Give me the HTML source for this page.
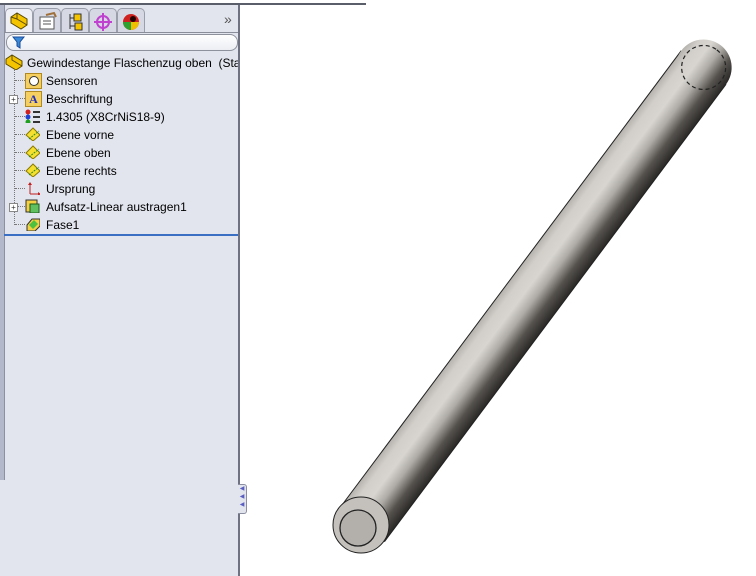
<!DOCTYPE html>
<html><head><style>
body{margin:0;width:756px;height:576px;background:#fff;position:relative;overflow:hidden;font-family:"Liberation Sans",sans-serif}
#topline{position:absolute;left:0;top:0;width:366px;height:3px;background:#fff;border-bottom:2px solid #5a5e6a}
#panel{position:absolute;left:0;top:5px;width:238px;height:571px;background:#e2e5ee;border-right:2px solid #6e7282}
#strip{position:absolute;left:0;top:5px;width:4px;height:475px;background:#b3b8cb;border-right:1px solid #8c90a0}
.tab{position:absolute;top:8px;width:26px;height:24px;background:#d6d9e3;border:1px solid #9a9eaa;border-bottom:none;border-radius:5px 5px 0 0}
#tabline{position:absolute;left:4px;top:32px;width:234px;height:1px;background:#8a8e9a}
#filter{position:absolute;left:6px;top:34px;width:230px;height:15px;border:1px solid #8d919c;border-radius:8px;background:linear-gradient(#fff,#eceef3)}
.it{position:absolute;left:46px;font-size:12px;color:#000;white-space:nowrap}
.ic{position:absolute;left:25px;width:15px;height:14px}
#blue{position:absolute;left:4px;top:234px;width:234px;height:2px;background:#3a6fc4}
.vl{position:absolute;left:14px;border-left:1px dotted #777}
.hl{position:absolute;border-top:1px dotted #777;width:10px;left:15px}
.pl{position:absolute;left:9px;width:7px;height:7px;border:1px solid #888;background:#fff;font-size:8px;line-height:7px;text-align:center;color:#333}
</style></head><body>
<div id="topline"></div>
<div id="panel"></div>
<div id="strip"></div>
<div class="tab" style="left:5px;background:#eef0f5"><svg width="26" height="24"><path d="M5 8l6-4 10 6v6l-6 4-10-6z" fill="#f5c400" stroke="#5a4a00"/><path d="M11 4v6l10 6M5 8l6 2" stroke="#5a4a00" fill="none"/></svg></div>
<div class="tab" style="left:33px"><svg width="26" height="24"><rect x="6" y="8" width="14" height="12" fill="#fff" stroke="#555"/><path d="M9 12h8M9 15h8" stroke="#555"/><path d="M12 6l8-2 2 4" stroke="#a0703a" stroke-width="2" fill="none"/></svg></div>
<div class="tab" style="left:61px"><svg width="26" height="24"><path d="M8 5v15M8 9h5M8 17h5" stroke="#333" fill="none"/><rect x="12" y="5" width="7" height="7" fill="#f5c400" stroke="#333"/><rect x="13" y="14" width="7" height="7" fill="#f5c400" stroke="#333"/></svg></div>
<div class="tab" style="left:89px"><svg width="26" height="24"><circle cx="13" cy="13" r="6" fill="none" stroke="#c040d0" stroke-width="2"/><path d="M13 4v18M4 13h18" stroke="#c040d0" stroke-width="2"/></svg></div>
<div class="tab" style="left:117px"><svg width="26" height="24"><circle cx="13" cy="13" r="8" fill="#d02020"/><path d="M13 13L5 13A8 8 0 0 0 13 21z" fill="#30a030"/><path d="M13 13L13 21A8 8 0 0 0 21 13z" fill="#f0c000"/><circle cx="15" cy="10" r="3" fill="#200"/></svg></div>
<div style="position:absolute;left:224px;top:11px;font-size:14px;color:#555">»</div>
<div id="tabline"></div>
<div id="filter"><svg width="14" height="14" style="position:absolute;left:5px;top:1px"><path d="M1 1h11l-4 5v6l-3-2V6z" fill="#3a8ad8" stroke="#1a4a9a"/></svg></div>
<svg style="position:absolute;left:5px;top:54px" width="18" height="16"><path d="M1 5l6-4 10 6v5l-6 4-10-6z" fill="#f5c400" stroke="#5a4a00"/><path d="M7 1v5l10 6" stroke="#5a4a00" fill="none"/></svg>
<div class="it" style="left:27px;top:56px;width:211px;overflow:hidden">Gewindestange Flaschenzug oben&nbsp; (Stan</div>
<div class="vl" style="top:70px;height:155px"></div>
<div class="hl" style="top:80px"></div><div class="hl" style="top:98px"></div><div class="hl" style="top:116px"></div><div class="hl" style="top:134px"></div><div class="hl" style="top:152px"></div><div class="hl" style="top:170px"></div><div class="hl" style="top:188px"></div><div class="hl" style="top:206px"></div><div class="hl" style="top:224px"></div>
<div class="pl" style="top:95px">+</div><div class="pl" style="top:203px">+</div>
<div class="ic" style="top:73px;background:#f5d060;border:1px solid #b08a20"><div style="margin:2px 3px;width:8px;height:8px;border:1px solid #333;border-radius:50%;background:#fff"></div></div>
<div class="it" style="top:74px">Sensoren</div>
<div class="ic" style="top:91px;background:#f5d060;border:1px solid #b08a20;color:#2030c0;font:bold 12px 'Liberation Serif',serif;text-align:center;line-height:14px">A</div>
<div class="it" style="top:92px">Beschriftung</div>
<svg class="ic" style="top:109px" width="16" height="15"><circle cx="3" cy="3" r="2.5" fill="#d02020"/><circle cx="3" cy="8" r="2.5" fill="#2040d0"/><circle cx="3" cy="13" r="2.5" fill="#20a020"/><path d="M8 3h7M8 8h7M8 13h7" stroke="#333" stroke-width="2"/></svg>
<div class="it" style="top:110px">1.4305 (X8CrNiS18-9)</div>
<svg class="ic" style="top:127px" width="16" height="15"><path d="M8 1l7 7-7 6-7-6z" fill="#f5e030" stroke="#8a7a00"/><path d="M4 12l10-8" stroke="#2a8a2a" stroke-dasharray="2 1"/></svg>
<div class="it" style="top:128px">Ebene vorne</div>
<svg class="ic" style="top:145px" width="16" height="15"><path d="M8 1l7 7-7 6-7-6z" fill="#f5e030" stroke="#8a7a00"/><path d="M4 12l10-8" stroke="#2a8a2a" stroke-dasharray="2 1"/></svg>
<div class="it" style="top:146px">Ebene oben</div>
<svg class="ic" style="top:163px" width="16" height="15"><path d="M8 1l7 7-7 6-7-6z" fill="#f5e030" stroke="#8a7a00"/><path d="M4 12l10-8" stroke="#2a8a2a" stroke-dasharray="2 1"/></svg>
<div class="it" style="top:164px">Ebene rechts</div>
<svg class="ic" style="top:181px" width="16" height="15"><path d="M5 13V2M5 13h10" stroke="#c02020"/><path d="M3 4l2-3 2 3M13 11l3 2-3 2" fill="#c02020"/></svg>
<div class="it" style="top:182px">Ursprung</div>
<svg class="ic" style="top:199px" width="16" height="15"><rect x="1" y="1" width="11" height="12" fill="#f5d040" stroke="#333"/><rect x="5" y="5" width="9" height="9" fill="#60c060" stroke="#1a5a1a"/></svg>
<div class="it" style="top:200px">Aufsatz-Linear austragen1</div>
<svg class="ic" style="top:217px" width="16" height="15"><path d="M2 8l5-6h8v7l-5 5H2z" fill="#f5d040" stroke="#333"/><path d="M4 8l5-5 4 4-5 5z" fill="#50c040"/></svg>
<div class="it" style="top:218px">Fase1</div>
<div id="blue"></div>
<div style="position:absolute;left:238px;top:484px;width:8px;height:28px;background:#e2e5ee;border:1px solid #8a8ea0;border-left:none;border-radius:0 3px 3px 0;color:#5a5ec0;font-size:6px;line-height:8px;text-align:center">◀<br>◀<br>◀</div>
<svg style="position:absolute;left:0;top:0" width="756" height="576">
<defs><linearGradient id="g" x1="0" y1="-28" x2="0" y2="28" gradientUnits="userSpaceOnUse">
<stop offset="0" stop-color="#b5b2ad"/><stop offset="0.15" stop-color="#d2cfca"/><stop offset="0.35" stop-color="#d8d5d0"/><stop offset="0.55" stop-color="#aeaba6"/><stop offset="0.78" stop-color="#55524e"/><stop offset="1" stop-color="#2a2826"/></linearGradient></defs>
<g transform="translate(362,525) rotate(-53.25)">
<rect x="0" y="-28" width="571" height="56" fill="url(#g)"/>
<line x1="0" y1="-28" x2="571" y2="-28" stroke="#222" stroke-width="1"/>
<line x1="0" y1="28" x2="571" y2="28" stroke="#222" stroke-width="1"/>
<circle cx="571" cy="0" r="28" fill="url(#g)"/>
<circle cx="571" cy="0" r="22" fill="none" stroke="#222" stroke-width="1.2" stroke-dasharray="4 3"/>
</g>
<circle cx="361" cy="525" r="28" fill="#c4c1bc" stroke="#222"/>
<circle cx="358" cy="528" r="18" fill="#b3b0ac" stroke="#222" stroke-width="1.3"/>
</svg>
</body></html>
